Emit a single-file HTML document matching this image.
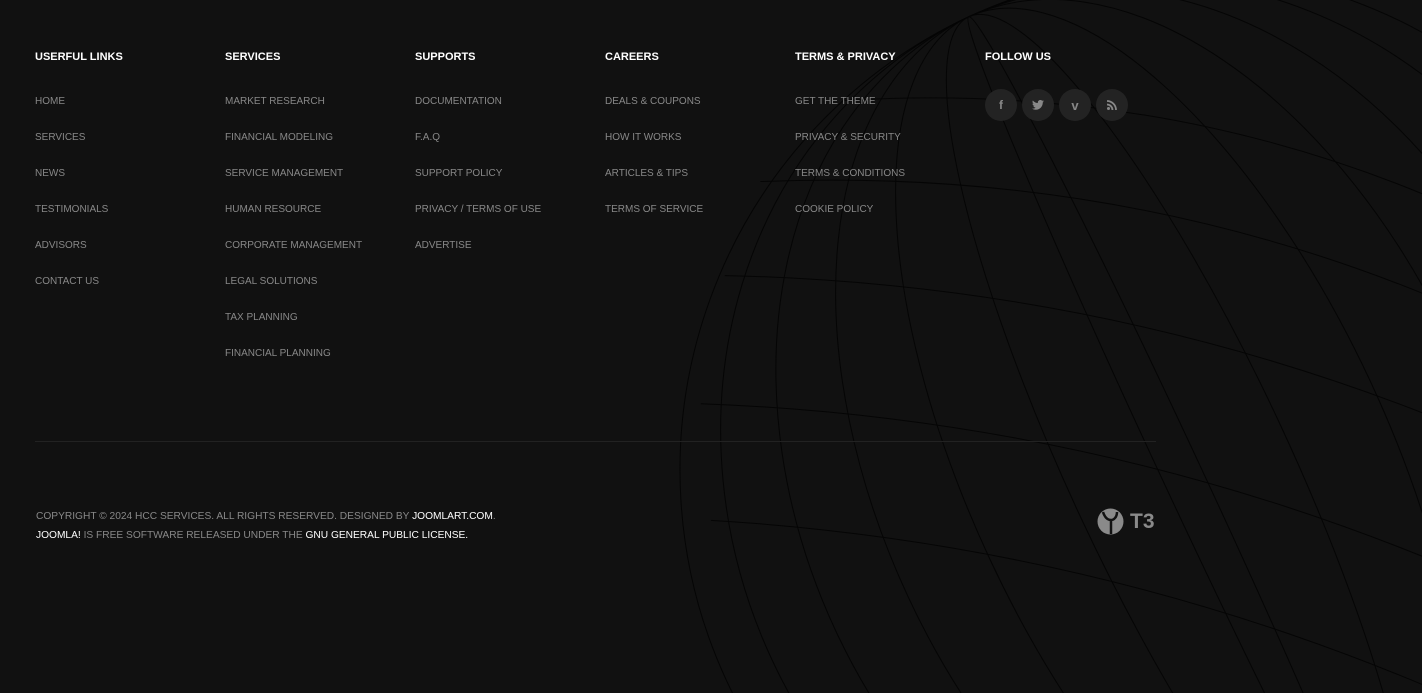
<!DOCTYPE html>
<html><head><style>
*{margin:0;padding:0;box-sizing:border-box}
html,body{width:1422px;height:693px;overflow:hidden}
body{background:#111;position:relative;font-family:"Liberation Sans",sans-serif;font-size:10px}
svg.g{position:absolute;left:0;top:0}
.col{position:absolute;top:50px}
.col h4{color:#fff;font-size:11px;font-weight:bold;height:14px;line-height:14px;margin-bottom:30px}
.col a{display:block;color:#888;text-decoration:none;line-height:14px;height:36px;font-size:10px;padding-top:1px}
.soc{position:absolute;top:89px;left:985px;display:flex;gap:5px}
.soc span{width:32px;height:32px;border-radius:50%;background:#232323;display:flex;align-items:center;justify-content:center;color:#888;font-weight:bold;font-size:12px}
.hr{position:absolute;left:35px;top:441px;width:1121px;height:1px;background:#222}
.copy{position:absolute;left:36px;top:507px;color:#888;line-height:19px;font-size:10.2px}
.copy b{color:#fff;font-weight:normal}
</style></head><body>
<svg class="g" width="1422" height="693" fill="none" stroke="#050505" stroke-width="1">
<g transform="rotate(-25 1180 470)">
<circle cx="1180" cy="470" r="500"/>
<ellipse cx="1180" cy="470" rx="450" ry="500"/>
<ellipse cx="1180" cy="470" rx="380" ry="500"/>
<ellipse cx="1180" cy="470" rx="300" ry="500"/>
<ellipse cx="1180" cy="470" rx="210" ry="500"/>
<ellipse cx="1180" cy="470" rx="110" ry="500"/>
<ellipse cx="1180" cy="470" rx="20" ry="500"/>
</g>
<g transform="rotate(15 1180 470)">
<path d="M700 300Q1180 150 1660 300"/>
<path d="M690 400Q1180 280 1670 400"/>
<path d="M700 530Q1180 420 1660 530"/>
<path d="M740 640Q1180 550 1620 640"/>
<path d="M760 200Q1180 60 1600 200"/>
</g>
</svg>
<div class="col" style="left:35px"><h4>USERFUL LINKS</h4><a>HOME</a><a>SERVICES</a><a>NEWS</a><a>TESTIMONIALS</a><a>ADVISORS</a><a>CONTACT US</a></div>
<div class="col" style="left:225px"><h4>SERVICES</h4><a>MARKET RESEARCH</a><a>FINANCIAL MODELING</a><a>SERVICE MANAGEMENT</a><a>HUMAN RESOURCE</a><a>CORPORATE MANAGEMENT</a><a>LEGAL SOLUTIONS</a><a>TAX PLANNING</a><a>FINANCIAL PLANNING</a></div>
<div class="col" style="left:415px"><h4>SUPPORTS</h4><a>DOCUMENTATION</a><a>F.A.Q</a><a>SUPPORT POLICY</a><a>PRIVACY / TERMS OF USE</a><a>ADVERTISE</a></div>
<div class="col" style="left:605px"><h4>CAREERS</h4><a>DEALS &amp; COUPONS</a><a>HOW IT WORKS</a><a>ARTICLES &amp; TIPS</a><a>TERMS OF SERVICE</a></div>
<div class="col" style="left:795px"><h4>TERMS &amp; PRIVACY</h4><a>GET THE THEME</a><a>PRIVACY &amp; SECURITY</a><a>TERMS &amp; CONDITIONS</a><a>COOKIE POLICY</a></div>
<div class="col" style="left:985px"><h4>FOLLOW US</h4></div>
<div class="soc"><span>f</span><span>
<svg width="12" height="10" viewBox="0 0 24 20"><path fill="#888" d="M24 2.4a10 10 0 0 1-2.8.8A5 5 0 0 0 23.3.4a10 10 0 0 1-3.1 1.2A4.9 4.9 0 0 0 11.8 6 14 14 0 0 1 1.7.9a4.9 4.9 0 0 0 1.5 6.6 5 5 0 0 1-2.2-.6 4.9 4.9 0 0 0 3.9 4.8 5 5 0 0 1-2.2.1 4.9 4.9 0 0 0 4.6 3.4A9.9 9.9 0 0 1 0 17.3 14 14 0 0 0 7.5 19.5c9 0 14-7.5 14-14v-.6A10 10 0 0 0 24 2.4z"/></svg></span><span style="font-size:13px">v</span><span>
<svg width="10" height="10" viewBox="0 0 10 10"><circle cx="1.5" cy="8.5" r="1.5" fill="#888"/><path d="M0 4.5a5.5 5.5 0 0 1 5.5 5.5M0 1a9 9 0 0 1 9 9" stroke="#888" stroke-width="1.8" fill="none"/></svg></span></div>
<div class="hr"></div>
<div class="copy">COPYRIGHT © 2024 HCC SERVICES. ALL RIGHTS RESERVED. DESIGNED BY <b>JOOMLART.COM</b>.<br><b>JOOMLA!</b> IS FREE SOFTWARE RELEASED UNDER THE <b>GNU GENERAL PUBLIC LICENSE.</b></div>
<div style="position:absolute;left:1097px;top:508px;display:flex;align-items:center;gap:6px">
<svg width="27" height="27" viewBox="0 0 27 27"><circle cx="13.5" cy="13.5" r="13" fill="#8a8a8a"/><path d="M6 4c2 6 5 8 8 8s6-3 6-8M14 12v14" stroke="#111" stroke-width="2.5" fill="none"/></svg>
<span style="color:#8a8a8a;font-weight:bold;font-size:21px">T3</span></div>
</body></html>
